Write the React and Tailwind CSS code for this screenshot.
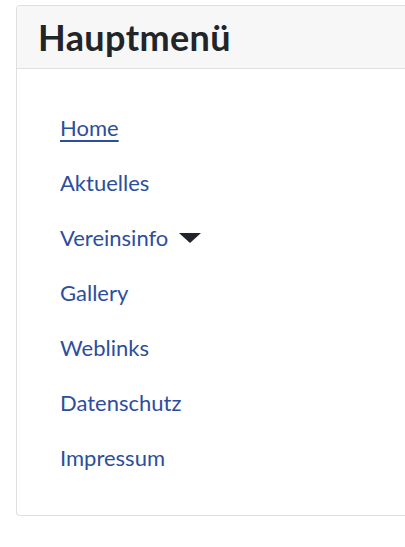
export default function App() {
  const items = ["Aktuelles", "Vereinsinfo", "Gallery", "Weblinks", "Datenschutz", "Impressum"];
  return (
    <div className="min-h-[547px] bg-white pt-[5px] pl-4" style={{ fontFamily: 'Lato, sans-serif' }}>
      <div className="w-[400px] border border-r-0 border-[#dfdfdf] rounded-l-[4px] overflow-hidden">
        <div className="h-[63px] bg-[#f7f7f7] border-b border-[#dfdfdf] flex items-center pl-[21px]">
          <h2 className="text-[36px] font-bold text-[#212529] leading-none tracking-[0.4px]">Hauptmenü</h2>
        </div>
        <ul className="pt-[44px] pb-[17px] pl-[43px] flex flex-col">
          <li className="h-[55px] flex items-start">
            <a href="#" className="text-[22px] leading-[30px] text-[#2d4e9c] underline underline-offset-[4px]">Home</a>
          </li>
          {items.map((t) => (
            <li key={t} className="h-[55px] flex items-start">
              <a href="#" className="text-[22px] leading-[30px] text-[#2d4e9c] flex items-center">
                {t}
                {t === "Vereinsinfo" && (
                  <span className="ml-[11px] inline-block w-0 h-0 border-l-[11px] border-r-[11px] border-t-[10px] border-l-transparent border-r-transparent border-t-[#212529]" />
                )}
              </a>
            </li>
          ))}
        </ul>
      </div>
    </div>
  );
}
